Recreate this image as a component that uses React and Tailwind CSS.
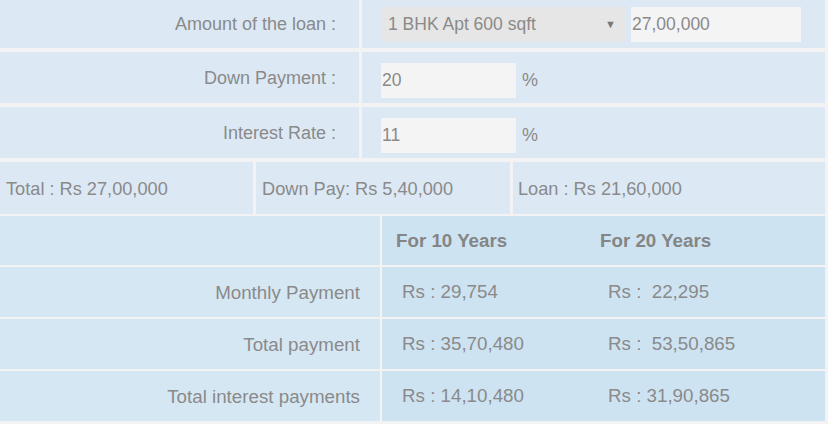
export default function App() {
  const font = { fontFamily: '"Liberation Sans", Arial, sans-serif' };
  return (
    <div
      className="w-[828px] h-[424px] overflow-hidden bg-[#f3f3f3] text-[#8a8a8a] pr-[3px]"
      style={font}
    >
      <div className="flex flex-col">
        {/* Row 1 */}
        <div className="flex h-[48px] gap-[3px]">
          <div className="w-[359px] bg-[#dce9f5] flex items-center justify-end pr-[23px] text-[18px]">
            Amount of the loan :
          </div>
          <div className="flex-1 bg-[#dce9f5] flex items-center pl-[19px] gap-[6px]">
            <div className="w-[244px] h-[35px] bg-[#e6e6e6] flex items-center justify-between pl-[7px] pr-[9px] text-[17.5px]">
              <span>1 BHK Apt 600 sqft</span>
              <span className="text-[11px] text-[#777]">▼</span>
            </div>
            <div className="w-[170px] h-[35px] bg-[#f4f4f4] flex items-center pl-[1px] text-[17.5px]">
              27,00,000
            </div>
          </div>
        </div>
        {/* Row 2 */}
        <div className="flex h-[51px] gap-[3px] mt-[4px]">
          <div className="w-[359px] bg-[#dce9f5] flex items-center justify-end pr-[23px] pt-[1px] text-[18px]">
            Down Payment :
          </div>
          <div className="flex-1 bg-[#dce9f5] flex items-center pl-[19px] pt-[6px] gap-[6px]">
            <div className="w-[135px] h-[35px] bg-[#f4f4f4] flex items-center pl-[1px] text-[17.5px]">
              20
            </div>
            <span className="text-[18px]">%</span>
          </div>
        </div>
        {/* Row 3 */}
        <div className="flex h-[51px] gap-[3px] mt-[4px]">
          <div className="w-[359px] bg-[#dce9f5] flex items-center justify-end pr-[23px] pt-[1px] text-[18px]">
            Interest Rate :
          </div>
          <div className="flex-1 bg-[#dce9f5] flex items-center pl-[19px] pt-[6px] gap-[6px]">
            <div className="w-[135px] h-[35px] bg-[#f4f4f4] flex items-center pl-[1px] text-[17.5px]">
              11
            </div>
            <span className="text-[18px]">%</span>
          </div>
        </div>
        {/* Row 4 totals */}
        <div className="flex h-[52px] gap-[3px] mt-[4px] text-[18.2px]">
          <div className="w-[253px] bg-[#dce9f5] flex items-center pl-[6px] pt-[3px]">
            Total : Rs 27,00,000
          </div>
          <div className="w-[254px] bg-[#dce9f5] flex items-center pl-[6px] pt-[3px]">
            Down Pay: Rs 5,40,000
          </div>
          <div className="flex-1 bg-[#dce9f5] flex items-center pl-[5px] pt-[3px]">
            Loan : Rs 21,60,000
          </div>
        </div>
        {/* Results */}
        <div className="flex flex-col gap-[2px] mt-[2px] text-[18.75px]">
          <div className="flex h-[49px] gap-[2px]">
            <div className="w-[380px] bg-[#d6e7f4]"></div>
            <div className="flex-1 bg-[#cde3f2] grid grid-cols-[204px_1fr] items-center pl-[14px] pt-[1px] font-bold text-[#858585]">
              <span>For 10 Years</span>
              <span>For 20 Years</span>
            </div>
          </div>
          {[
            ["Monthly Payment", "Rs : 29,754", "Rs :  22,295"],
            ["Total payment", "Rs : 35,70,480", "Rs :  53,50,865"],
            ["Total interest payments", "Rs : 14,10,480", "Rs : 31,90,865"],
          ].map(([label, a, b]) => (
            <div key={label} className="flex h-[50px] gap-[2px]">
              <div className="w-[380px] bg-[#d6e7f4] flex items-center justify-end pr-[20px] pt-[2px]">
                {label}
              </div>
              <div className="flex-1 bg-[#cde3f2] grid grid-cols-[206px_1fr] items-center pl-[20px] pt-[1px] whitespace-pre">
                <span>{a}</span>
                <span>{b}</span>
              </div>
            </div>
          ))}
        </div>
      </div>
    </div>
  );
}
